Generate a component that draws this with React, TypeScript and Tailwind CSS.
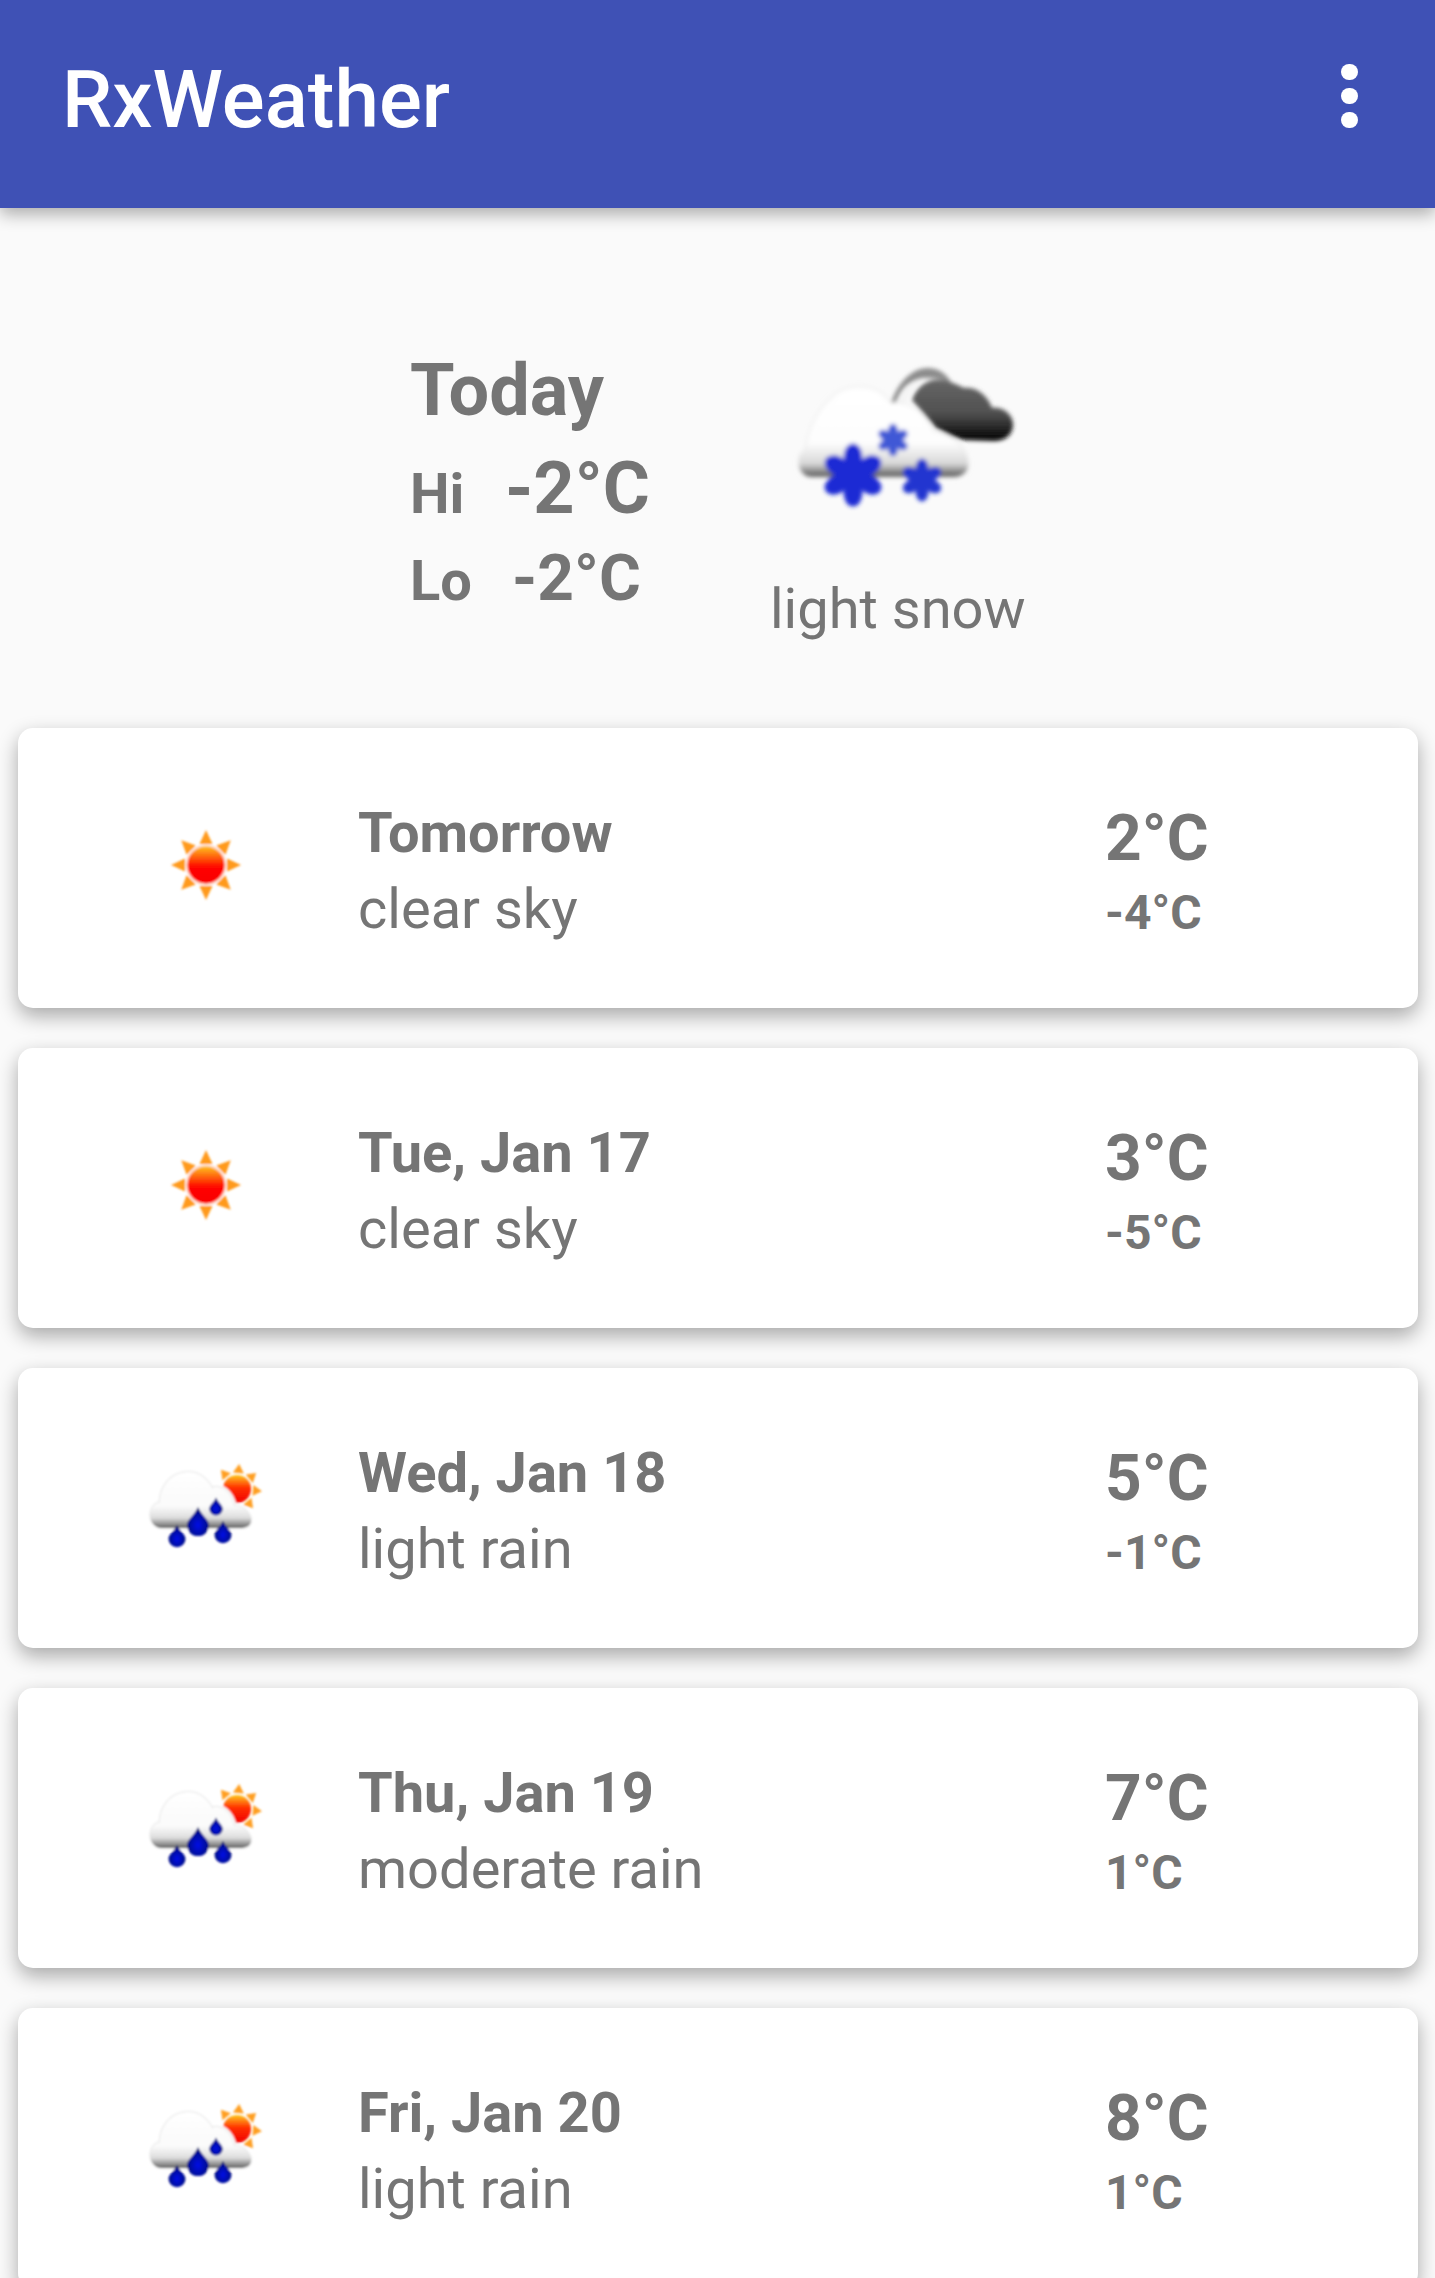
import React from "react";

function Sun() {
  const rays = [0, 45, 90, 135, 180, 225, 270, 315];
  return (
    <svg width="80" height="80" viewBox="0 0 80 80">
      <defs>
        <linearGradient id="sunG" x1="0" y1="0" x2="0" y2="1">
          <stop offset="0" stopColor="#ffc020" />
          <stop offset="0.45" stopColor="#ff2a00" />
          <stop offset="0.6" stopColor="#ff0000" />
          <stop offset="1" stopColor="#f80000" />
        </linearGradient>
        <filter id="sb" x="-10%" y="-10%" width="120%" height="120%">
          <feGaussianBlur stdDeviation="0.9" />
        </filter>
      </defs>
      <g filter="url(#sb)">
        {rays.map((r) => (
          <polygon key={r} points="40,5 33.5,19 46.5,19" fill="#ff9a1c" transform={`rotate(${r} 40 40)`} />
        ))}
        <circle cx="40" cy="40" r="20.5" fill="#ffd9c8" />
        <circle cx="40" cy="40" r="18.5" fill="url(#sunG)" />
      </g>
    </svg>
  );
}

function Rain({ id }: { id: string }) {
  const drop = (x: number, y: number, s: number, k: string) => (
    <path
      key={k}
      d={`M${x} ${y - s * 1.55} C${x + s * 0.25} ${y - s * 0.9} ${x + s} ${y - s * 0.4} ${x + s} ${y + s * 0.1} A${s} ${s} 0 1 1 ${x - s} ${y + s * 0.1} C${x - s} ${y - s * 0.4} ${x - s * 0.25} ${y - s * 0.9} ${x} ${y - s * 1.55}Z`}
      fill={`url(#${id}d)`}
    />
  );
  const cloud =
    "M22 78 C8 78 6 56 20 52 C20 36 32 22 48 22 C60 22 68 30 72 38 C82 34 92 44 94 56 C104 56 111 64 111 70 C111 76 106 78 100 78 Z";
  return (
    <svg width="130" height="110" viewBox="0 0 130 110">
      <defs>
        <linearGradient id={`${id}c`} x1="0" y1="0" x2="0" y2="1">
          <stop offset="0" stopColor="#ffffff" />
          <stop offset="0.62" stopColor="#fafafa" />
          <stop offset="0.82" stopColor="#dcdcdc" />
          <stop offset="0.94" stopColor="#8a8a8a" />
          <stop offset="1" stopColor="#666666" />
        </linearGradient>
        <linearGradient id={`${id}s`} x1="0" y1="0" x2="0" y2="1">
          <stop offset="0" stopColor="#ffc820" />
          <stop offset="0.45" stopColor="#ff3000" />
          <stop offset="1" stopColor="#f00000" />
        </linearGradient>
        <radialGradient id={`${id}d`} cx="0.5" cy="0.62" r="0.6">
          <stop offset="0" stopColor="#0008e8" />
          <stop offset="0.65" stopColor="#00109a" />
          <stop offset="1" stopColor="#001060" />
        </radialGradient>
        <filter id={`${id}b`} x="-10%" y="-10%" width="120%" height="120%">
          <feGaussianBlur stdDeviation="1.1" />
        </filter>
        <filter id={`${id}o`} x="-15%" y="-15%" width="130%" height="130%">
          <feDropShadow dx="0" dy="0" stdDeviation="0.8" floodColor="#c8c8c8" />
        </filter>
      </defs>
      <g filter={`url(#${id}b)`} transform="translate(-1 0)">
        {[-40, 5, 50, 95, 140].map((r) => (
          <polygon key={r} points="97,14 91.5,23 102.5,23" fill="#ff9f20" transform={`rotate(${r} 97 39)`} />
        ))}
        <circle cx="97" cy="39" r="14" fill={`url(#${id}s)`} />
        <path d={cloud} fill="#ffffff" stroke="#ffffff" strokeWidth="5" />
        <path d={cloud} fill={`url(#${id}c)`} filter={`url(#${id}o)`} />
        {drop(37, 88, 8.5, "a")}
        {drop(58, 74, 11, "b")}
        {drop(76, 58, 6.8, "c")}
        {drop(83, 84, 8.5, "e")}
      </g>
    </svg>
  );
}

function Snow() {
  const flake = (cx: number, cy: number, r: number, k: string, fill: string) => (
    <g key={k} fill={fill}>
      <circle cx={cx} cy={cy} r={r * 0.3} />
      {[0, 60, 120, 180, 240, 300].map((a) => (
        <ellipse
          key={a}
          cx={cx}
          cy={cy - r * 0.6}
          rx={r * 0.3}
          ry={r * 0.42}
          transform={`rotate(${a} ${cx} ${cy})`}
        />
      ))}
    </g>
  );
  return (
    <svg width="270" height="170" viewBox="0 0 270 170">
      <defs>
        <linearGradient id="snC" x1="0" y1="0" x2="0" y2="1">
          <stop offset="0" stopColor="#ffffff" />
          <stop offset="0.62" stopColor="#fdfdfd" />
          <stop offset="0.85" stopColor="#d8d8d8" />
          <stop offset="0.96" stopColor="#777777" />
          <stop offset="1" stopColor="#555555" />
        </linearGradient>
        <linearGradient id="snD" x1="0" y1="0" x2="0" y2="1">
          <stop offset="0" stopColor="#666666" />
          <stop offset="0.55" stopColor="#505050" />
          <stop offset="1" stopColor="#000000" />
        </linearGradient>
        <filter id="snB" x="-10%" y="-10%" width="120%" height="120%">
          <feGaussianBlur stdDeviation="2" />
        </filter>
        <filter id="snO" x="-10%" y="-10%" width="120%" height="120%">
          <feDropShadow dx="0" dy="0" stdDeviation="1.5" floodColor="#d4d4d4" />
        </filter>
      </defs>
      <g filter="url(#snB)">
        <path d="M131 44 C136 26 150 8 168 8 C182 8 190 18 194 28 C182 16 160 14 146 26 C140 32 138 38 134 46Z" fill="#8c8c8c" />
        <path d="M138 44 C142 32 152 20 164 18 C156 24 150 32 146 42Z" fill="#f4f4f4" />
        <path
          d="M152 40 C156 28 166 20 176 20 C188 20 196 24 204 28 C216 26 228 36 232 48 C244 46 254 56 253 66 C252 76 244 81 234 81 L204 80 C194 78 184 72 176 68 Z"
          fill="url(#snD)"
        />
        <path
          d="M52 117 C36 117 36 94 46 90 C48 70 58 50 72 38 C84 24 112 24 124 36 L130 43 C146 42 164 50 173 72 C190 74 208 88 208 104 C208 112 202 117 194 117 Z"
          fill="url(#snC)"
          filter="url(#snO)"
        />
        {flake(93, 115, 31, "a", "#1c2cd4")}
        {flake(133, 80, 16, "b", "#3f58d6")}
        {flake(162, 120, 21, "c", "#2034d0")}
      </g>
    </svg>
  );
}

const days = [
  { t: "Tomorrow", d: "clear sky", hi: "2°C", lo: "-4°C", i: "sun" },
  { t: "Tue, Jan 17", d: "clear sky", hi: "3°C", lo: "-5°C", i: "sun" },
  { t: "Wed, Jan 18", d: "light rain", hi: "5°C", lo: "-1°C", i: "rain" },
  { t: "Thu, Jan 19", d: "moderate rain", hi: "7°C", lo: "1°C", i: "rain" },
  { t: "Fri, Jan 20", d: "light rain", hi: "8°C", lo: "1°C", i: "rain" },
];

export default function App() {
  return (
    <div className="h-[2278px] w-[1435px] overflow-hidden bg-[#fafafa] text-[#757575] font-['Roboto',sans-serif]">
      <header className="relative z-10 flex h-[208px] items-center justify-between bg-[#3f51b5] pb-[9px] pl-[62px] pr-[77px] shadow-[0_6px_16px_rgba(0,0,0,0.32)]">
        <h1 className="text-[80px] font-medium leading-none text-white">RxWeather</h1>
        <div className="flex flex-col gap-[8px] pb-[7px]">
          <span className="h-[16px] w-[17px] rounded-full bg-white" />
          <span className="h-[16px] w-[17px] rounded-full bg-white" />
          <span className="h-[16px] w-[17px] rounded-full bg-white" />
        </div>
      </header>
      <section className="flex h-[520px] items-start pl-[410px]">
        <div className="w-[350px] pt-[139px]">
          <div className="text-[72px] font-bold leading-[88px]">Today</div>
          <div className="flex h-[96px] items-baseline font-bold">
            <span className="w-[96px] text-[56px]">Hi</span>
            <span className="-ml-[1px] text-[72px]">-2°C</span>
          </div>
          <div className="flex h-[90px] items-baseline font-bold">
            <span className="w-[102px] text-[56px]">Lo</span>
            <span className="text-[64px]">-2°C</span>
          </div>
        </div>
        <div className="flex flex-col pt-[152px]">
          <div className="h-[170px]">
            <Snow />
          </div>
          <div className="pl-[10px] pt-[43px] text-[56px] leading-[72px]">light snow</div>
        </div>
      </section>
      <main className="flex flex-col gap-[40px] pl-[18px] pr-[17px]">
        {days.map((d) => (
          <article
            key={d.t}
            className="flex h-[280px] shrink-0 items-center rounded-[15px] bg-white shadow-[0_8px_20px_rgba(0,0,0,0.33)]"
          >
            <div className="flex w-[340px] shrink-0 justify-center pb-[6px] pl-[36px]">
              {d.i === "sun" ? <Sun /> : <Rain id={d.t.slice(0, 3)} />}
            </div>
            <div className="w-[747px] shrink-0 pt-[6px]">
              <div className="text-[56px] font-bold leading-[76px]">{d.t}</div>
              <div className="text-[56px] leading-[76px]">{d.d}</div>
            </div>
            <div className="pt-[6px] font-bold">
              <div className="text-[64px] leading-[80px]">{d.hi}</div>
              <div className="mt-[3px] text-[48px] leading-[62px]">{d.lo}</div>
            </div>
          </article>
        ))}
      </main>
    </div>
  );
}
